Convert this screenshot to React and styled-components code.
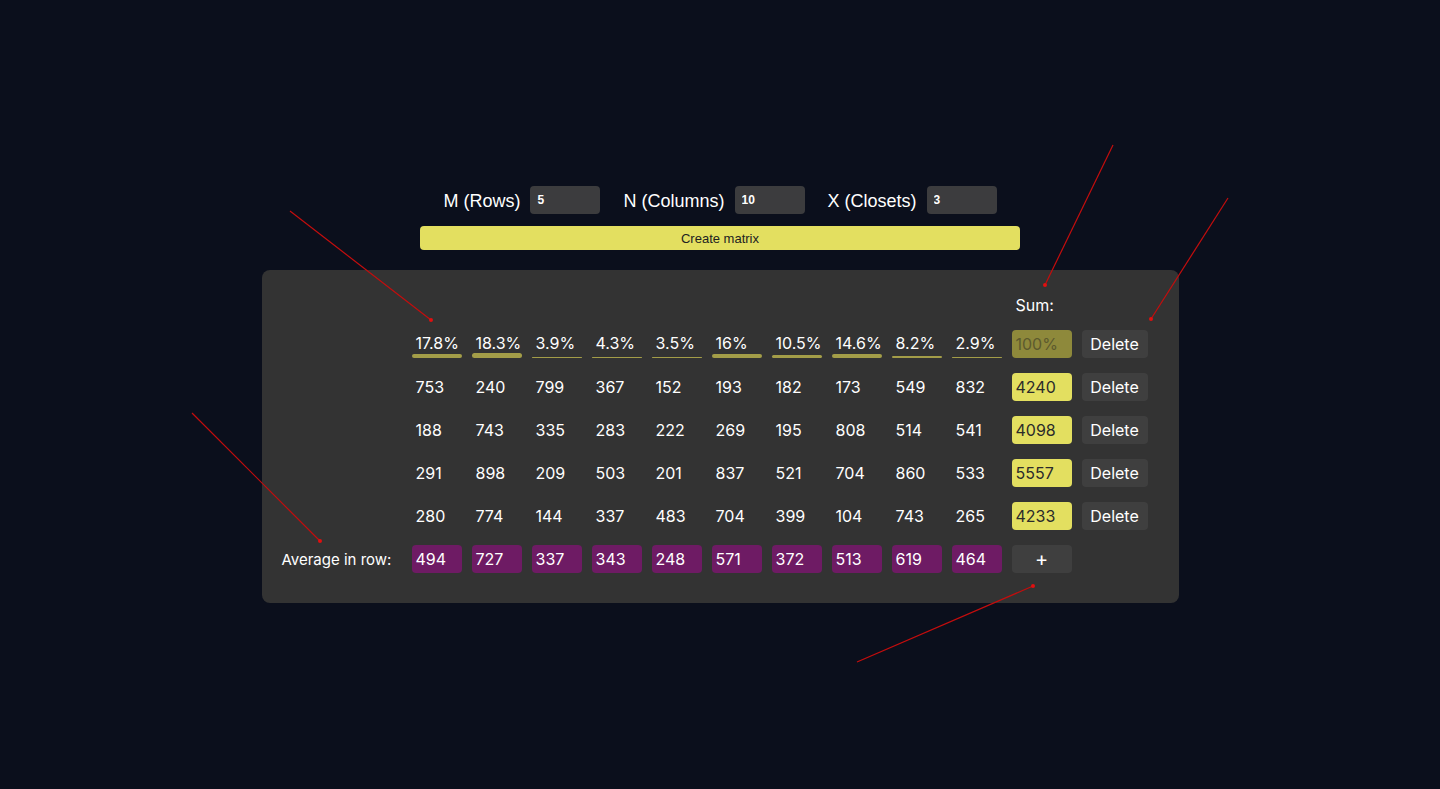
import styled, { createGlobalStyle } from "styled-components";

const GlobalStyle = createGlobalStyle`
  html, body {
    margin: 0;
    padding: 0;
    background: #0b0f1c;
    font-family: Inter, "Liberation Sans", sans-serif;
    color: #fff;
  }
`

const Page = styled.div`
  position: relative;
  width: 1440px;
  height: 789px;
  overflow: hidden;
  display: flex;
  flex-direction: column;
  align-items: center;
  padding-top: 186px;
  box-sizing: border-box;
`

const Form = styled.div`
  display: flex;
  align-items: center;
  gap: 23px;
`

const Field = styled.label`
  display: flex;
  align-items: center;
  gap: 10px;
  font-family: "Liberation Sans", Arial, sans-serif;
  font-size: 18px;
  color: #fff;
  padding-top: 2px;
`

const Input = styled.input`
  width: 70px;
  height: 28px;
  box-sizing: border-box;
  border: none;
  border-radius: 4px;
  background: #3c3c3e;
  color: #fff;
  font-family: "Liberation Sans", Arial, sans-serif;
  font-size: 12px;
  font-weight: bold;
  padding: 0 7px;
  margin-top: -2px;
  outline: none;
`

const CreateButton = styled.button`
  width: 600px;
  height: 24px;
  margin-top: 12px;
  border: none;
  border-radius: 4px;
  background: #e3df60;
  color: #222;
  font-family: "Liberation Sans", Arial, sans-serif;
  font-size: 13px;
  cursor: pointer;
`

const Panel = styled.div`
  margin-top: 20px;
  background: #333333;
  border-radius: 8px;
  padding: 21px 31px 30px 20px;
  display: flex;
  flex-direction: column;
  gap: 15px;
`

const Row = styled.div`
  display: grid;
  grid-template-columns: 120px repeat(10, 50px) 60px 66px;
  column-gap: 10px;
  align-items: center;
  height: ${p => p.$h || 28}px;
`

const Label = styled.div`
  font-size: 15px;
  color: #fff;
`

const Cell = styled.div`
  height: 28px;
  display: flex;
  align-items: center;
  padding-left: 4px;
  font-size: 16px;
  color: #fff;
  box-sizing: border-box;
`

const PercentCell = styled(Cell)`
  position: relative;
  padding-bottom: 2px;
`

const Bar = styled.div`
  position: absolute;
  left: 0;
  right: 0;
  bottom: 0;
  border-radius: 3px;
  background: #a39d48;
`

const SumCell = styled(Cell)`
  background: ${p => (p.$dim ? "#8e893b" : "#e3df60")};
  color: ${p => (p.$dim ? "#5c5a2e" : "#2b2b2b")};
  border-radius: 4px;
`

const AvgCell = styled(Cell)`
  background: #6e1b64;
  border-radius: 4px;
`

const GreyButton = styled.button`
  height: 28px;
  border: none;
  border-radius: 4px;
  background: #3f3f3f;
  color: #fff;
  font-family: Inter, "Liberation Sans", sans-serif;
  font-size: ${p => (p.$big ? 20 : 16)}px;
  padding: 0;
  cursor: pointer;
`

const Overlay = styled.svg`
  position: absolute;
  left: 0;
  top: 0;
  pointer-events: none;
`

const percents = [17.8, 18.3, 3.9, 4.3, 3.5, 16, 10.5, 14.6, 8.2, 2.9]

const matrix = [
  [753, 240, 799, 367, 152, 193, 182, 173, 549, 832],
  [188, 743, 335, 283, 222, 269, 195, 808, 514, 541],
  [291, 898, 209, 503, 201, 837, 521, 704, 860, 533],
  [280, 774, 144, 337, 483, 704, 399, 104, 743, 265],
]

const averages = [494, 727, 337, 343, 248, 571, 372, 513, 619, 464]

const arrows = [
  [290, 211, 431, 320],
  [1113, 145, 1045, 285],
  [1228, 198, 1151, 319],
  [192, 413, 320, 541],
  [857, 662, 1033, 586],
]

const App = () => {
  return (
    <Page>
      <GlobalStyle />
      <Form>
        <Field>M (Rows) <Input defaultValue="5" /></Field>
        <Field>N (Columns) <Input defaultValue="10" /></Field>
        <Field>X (Closets) <Input defaultValue="3" /></Field>
      </Form>
      <CreateButton>Create matrix</CreateButton>

      <Panel>
        <Row $h={24}>
          <span />
          {percents.map((_, i) => <span key={i} />)}
          <Cell>Sum:</Cell>
          <span />
        </Row>

        <Row>
          <span />
          {percents.map((p, i) => (
            <PercentCell key={i}>
              {p}%
              <Bar style={{ height: Math.max(1, Math.round(p / 4)) }} />
            </PercentCell>
          ))}
          <SumCell $dim>100%</SumCell>
          <GreyButton>Delete</GreyButton>
        </Row>

        {matrix.map((row, r) => (
          <Row key={r}>
            <span />
            {row.map((v, i) => <Cell key={i}>{v}</Cell>)}
            <SumCell>{row.reduce((a, b) => a + b, 0)}</SumCell>
            <GreyButton>Delete</GreyButton>
          </Row>
        ))}

        <Row>
          <Label>Average in row:</Label>
          {averages.map((v, i) => <AvgCell key={i}>{v}</AvgCell>)}
          <GreyButton $big>+</GreyButton>
          <span />
        </Row>
      </Panel>

      <Overlay width="1440" height="789">
        {arrows.map(([x1, y1, x2, y2], i) => (
          <g key={i}>
            <line x1={x1} y1={y1} x2={x2} y2={y2} stroke="#c40d0d" strokeWidth="1.2" />
            <circle cx={x2} cy={y2} r="2" fill="#e01010" />
          </g>
        ))}
      </Overlay>
    </Page>
  )
}

export default App
